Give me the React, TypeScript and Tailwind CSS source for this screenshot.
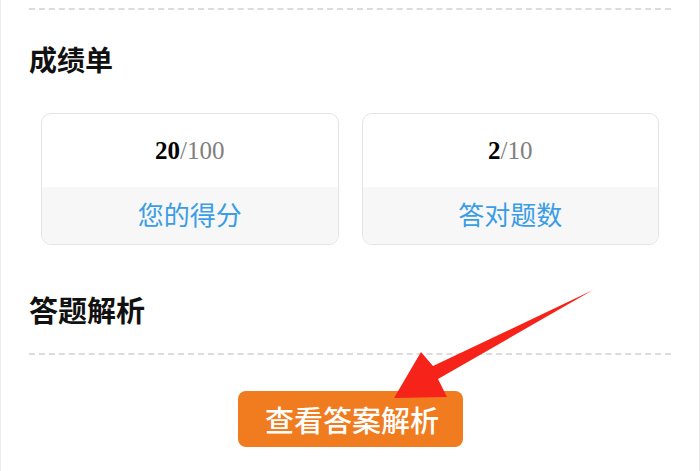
const cjk = "font-['Noto_Sans_CJK_SC','Noto_Sans',sans-serif]";

const scores = [
  { value: "20", total: "/100", label: "您的得分" },
  { value: "2", total: "/10", label: "答对题数" },
];

function ScoreCard({ value, total, label }: { value: string; total: string; label: string }) {
  return (
    <div className="flex h-[132px] flex-col overflow-hidden rounded-[10px] border border-[#e4e4e4] bg-white">
      <div className="flex h-[73px] items-center justify-center font-['Liberation_Serif',serif] text-[25px] leading-none">
        <span className="font-bold text-black">{value}</span>
        <span className="text-[#808080]">{total}</span>
      </div>
      <div className={`flex flex-1 items-center justify-center bg-[#f7f7f7] pb-[3px] ${cjk} text-[26px] leading-none text-[#3a9de5]`}>
        {label}
      </div>
    </div>
  );
}

export default function App() {
  return (
    <div className="relative h-[471px] w-[700px] overflow-hidden border-x border-[#ececec] bg-white">
      <div className="px-[28px]">
        <div className="mt-[8px] border-t-2 border-dashed border-[#dcdcdc]" />
        <h2 className={`mt-[35px] ${cjk} text-[28px] font-bold leading-[28px] text-[#111]`}>成绩单</h2>
        <div className="mt-[40px] grid grid-cols-2 gap-[23px] px-[12px]">
          {scores.map((s) => (
            <ScoreCard key={s.label} {...s} />
          ))}
        </div>
        <h2 className={`mt-[50px] ${cjk} text-[29px] font-bold leading-[28px] text-[#111]`}>答题解析</h2>
        <div className="mt-[30px] border-t-2 border-dashed border-[#dcdcdc]" />
        <div className="mt-[36px] flex justify-center">
          <button
            type="button"
            className={`flex h-[56px] w-[225px] items-center justify-center rounded-[8px] bg-[#f07c1f] pl-[4px] ${cjk} text-[29px] font-medium leading-none text-white`}
          >
            查看答案解析
          </button>
        </div>
      </div>

      {/* red annotation arrow */}
      <svg className="pointer-events-none absolute left-0 top-0" width="700" height="471" viewBox="0 0 700 471">
        <polygon
          points="592,290 437,379 446,397 393,398 420,352 432,366"
          fill="#f5231a"
        />
      </svg>
    </div>
  );
}
